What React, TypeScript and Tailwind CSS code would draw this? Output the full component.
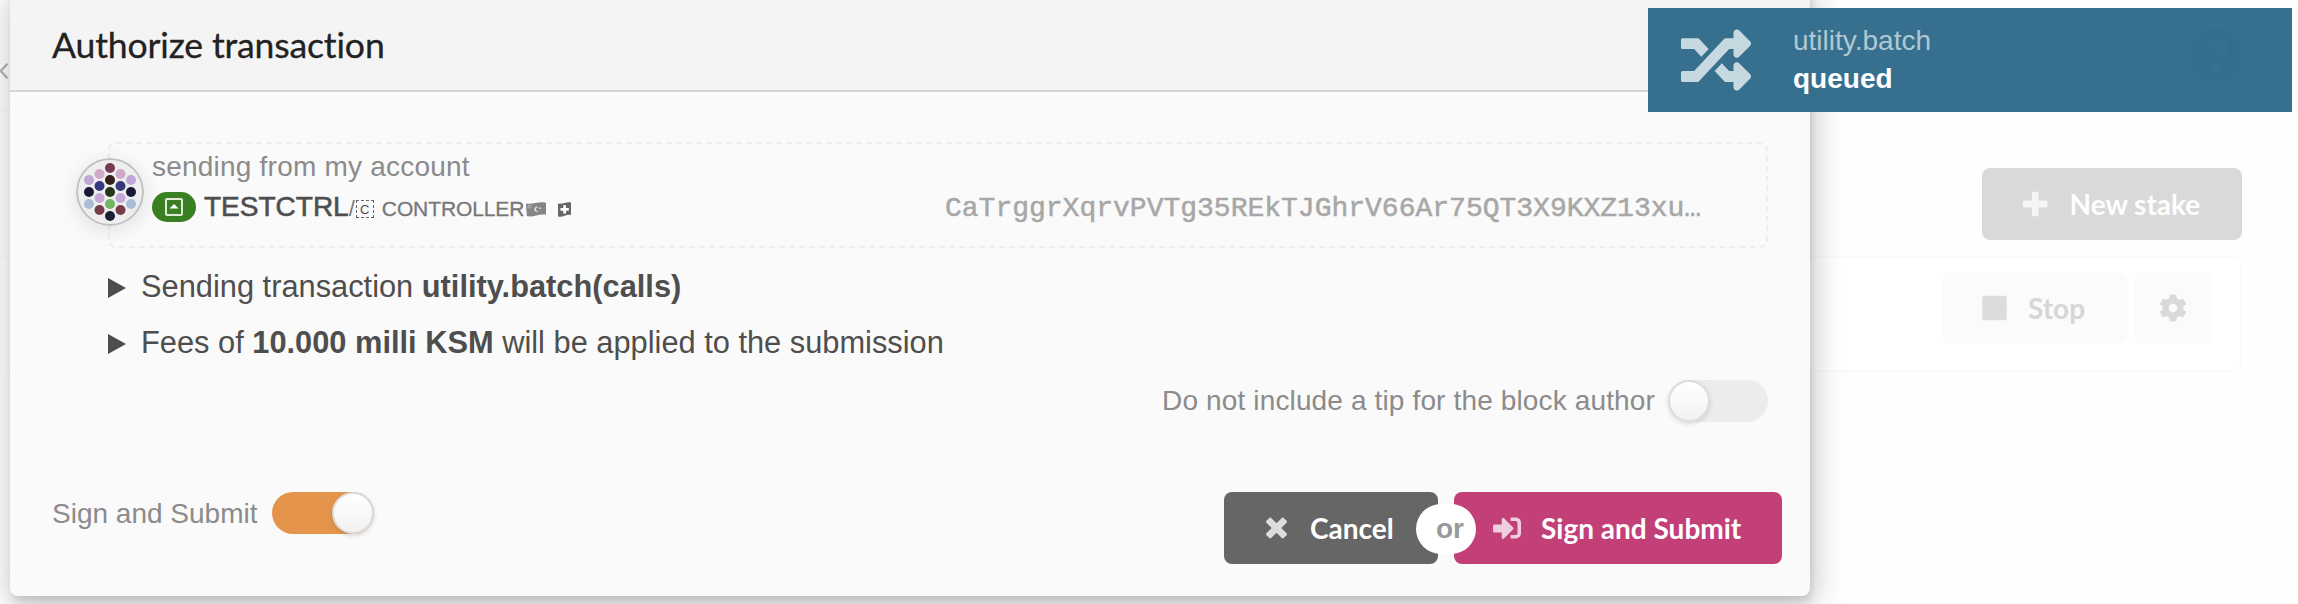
import type { ReactNode } from 'react';
import { FaQuestionCircle, FaRandom, FaSignInAlt, FaStop } from 'react-icons/fa';

type IconProps = { className?: string };

function PlusIcon({ className }: IconProps) {
  return (
    <svg viewBox="0 0 448 512" className={className} fill="currentColor">
      <path d="M448 294.2v-76.4c0-13.3-10.7-24-24-24H286.2V56c0-13.3-10.7-24-24-24h-76.4c-13.3 0-24 10.7-24 24v137.8H24c-13.3 0-24 10.7-24 24v76.4c0 13.3 10.7 24 24 24h137.8V456c0 13.3 10.7 24 24 24h76.4c13.3 0 24-10.7 24-24V318.2H424c13.3 0 24-10.7 24-24z" />
    </svg>
  );
}

function TimesIcon({ className }: IconProps) {
  return (
    <svg viewBox="0 0 384 512" className={className} fill="currentColor">
      <path d="M323.1 441l53.9-53.9c9.4-9.4 9.4-24.5 0-33.9L279.8 256l97.2-97.2c9.4-9.4 9.4-24.5 0-33.9L323.1 71c-9.4-9.4-24.5-9.4-33.9 0L192 168.2 94.8 71c-9.4-9.4-24.5-9.4-33.9 0L7 124.9c-9.4 9.4-9.4 24.5 0 33.9l97.2 97.2L7 353.2c-9.4 9.4-9.4 24.5 0 33.9L60.9 441c9.4 9.4 24.5 9.4 33.9 0l97.2-97.2 97.2 97.2c9.3 9.3 24.5 9.3 33.9 0z" />
    </svg>
  );
}

function CogIcon({ className }: IconProps) {
  return (
    <svg viewBox="0 0 512 512" className={className} fill="currentColor">
      <path d="M444.788 291.1l42.616 24.599c4.867 2.809 7.126 8.618 5.459 13.985-11.07 35.642-29.97 67.842-54.689 94.586a12.016 12.016 0 0 1-14.832 2.254l-42.584-24.595a191.577 191.577 0 0 1-60.759 35.13v49.182a12.01 12.01 0 0 1-9.377 11.718c-34.956 7.85-72.499 8.256-109.219.007-5.49-1.233-9.403-6.096-9.403-11.723v-49.184a191.555 191.555 0 0 1-60.759-35.13l-42.584 24.595a12.016 12.016 0 0 1-14.832-2.254c-24.718-26.744-43.619-58.944-54.689-94.586-1.667-5.366.592-11.175 5.459-13.985L67.212 291.1a193.48 193.48 0 0 1 0-70.199l-42.616-24.599c-4.867-2.809-7.126-8.618-5.459-13.985 11.07-35.642 29.97-67.842 54.689-94.586a12.016 12.016 0 0 1 14.832-2.254l42.584 24.595a191.577 191.577 0 0 1 60.759-35.13V25.759a12.01 12.01 0 0 1 9.377-11.718c34.956-7.85 72.499-8.256 109.219-.007 5.49 1.233 9.403 6.096 9.403 11.723v49.184a191.555 191.555 0 0 1 60.759 35.13l42.584-24.595a12.016 12.016 0 0 1 14.832 2.254c24.718 26.744 43.619 58.944 54.689 94.586 1.667 5.366-.592 11.175-5.459 13.985L444.788 220.9a193.485 193.485 0 0 1 0 70.2zM336 256c0-44.112-35.888-80-80-80s-80 35.888-80 80 35.888 80 80 80 80-35.888 80-80z" />
    </svg>
  );
}

const dots: [number, number, string][] = [
  [34, 10, '#773b58'],
  [23.5, 16, '#d2a8c8'],
  [44.5, 16, '#d2a8c8'],
  [13, 22, '#bfa8d8'],
  [34, 22, '#35201a'],
  [55, 22, '#bfa8d8'],
  [23.5, 28, '#38397c'],
  [44.5, 28, '#38397c'],
  [13, 34, '#191a35'],
  [34, 34, '#26341c'],
  [55, 34, '#191a35'],
  [23.5, 40, '#c3a8d8'],
  [44.5, 40, '#c3a8d8'],
  [13, 46, '#a9bdd9'],
  [34, 46, '#70b666'],
  [55, 46, '#a9bdd9'],
  [23.5, 52, '#773b4a'],
  [44.5, 52, '#773b4a'],
  [34, 58, '#1a2035'],
];

function Identicon() {
  return (
    <svg
      viewBox="0 0 68 68"
      className="size-[68px] shrink-0 rounded-full bg-[#eeeeee] shadow-[0_4px_20px_rgba(0,0,0,0.11)]"
    >
      <circle cx="34" cy="34" r="33" fill="#eeeeee" stroke="#c0c0c0" strokeWidth="2" />
      {dots.map(([x, y, fill], i) => (
        <circle key={i} cx={x} cy={y} r="5" fill={fill} />
      ))}
    </svg>
  );
}

function Toggle({ on }: { on?: boolean }) {
  return (
    <span
      className={
        on
          ? 'flex h-[42px] w-[102px] justify-end rounded-full bg-[#e5954b]'
          : 'flex h-[42px] w-[100px] rounded-full bg-[#ececec]'
      }
    >
      <span className="size-[42px] rounded-full border-2 border-[#dcdcdd] bg-linear-to-b from-white to-[#f2f2f2] shadow-[0_2px_4px_rgba(34,36,38,0.15)]" />
    </span>
  );
}

function Summary({ children }: { children: ReactNode }) {
  return (
    <div className="flex h-14 items-center whitespace-pre text-[30.8px] text-[#4e4e4e]">
      <svg viewBox="0 0 18 20" className="mr-[15px] h-5 w-[18px]" fill="currentColor">
        <path d="M0 0L18 10L0 20z" />
      </svg>
      <span className="pb-0.5">{children}</span>
    </div>
  );
}

function Background() {
  return (
    <div className="flex h-[604px] flex-col bg-[#fefefe]">
      <div className="flex h-[111px] shrink-0 items-center justify-between border-b border-[#f6f6f6] pr-[55px]">
        <svg viewBox="0 0 9 18" className="mt-[31px] h-[18px] w-[9px]" fill="none">
          <path d="M7.5 1.8L.8 9L7.5 16.2" stroke="#b5b5b5" strokeWidth="2.4" />
        </svg>
        <FaQuestionCircle className="size-[54px] text-[#bbbbbb]" />
      </div>
      <div className="flex justify-end pt-[57px] pr-14">
        <button className="flex h-[72px] w-[260px] items-center rounded-lg bg-[#d9d9d9] pb-px pl-[41px] font-['Lato',sans-serif] text-[28px] font-bold text-[#fefefe]">
          <PlusIcon className="mr-[22px] h-7 w-[24.5px] text-[#f5f5f5]" />
          New stake
        </button>
      </div>
      <div className="mt-4 mr-14 flex h-[116px] justify-end gap-1.5 rounded-r-lg border-2 border-[#fbfbfb] bg-white pt-[14px] pr-7">
        <button className="flex h-[72px] w-[186px] items-center rounded-lg bg-[#fbfbfb] pb-px pl-10 font-['Lato',sans-serif] text-[28px] font-bold text-[#d6d6d6]">
          <FaStop className="mr-[21px] h-7 w-[25px] text-[#dcdcdc]" />
          Stop
        </button>
        <button className="flex h-[72px] w-[78px] items-center justify-center rounded-lg bg-[#fbfbfb] text-[#d9d9d9]">
          <CogIcon className="size-7" />
        </button>
      </div>
    </div>
  );
}

function AuthorizeModal() {
  return (
    <section className="absolute top-[-10px] left-[10px] flex h-[606px] w-[1800px] flex-col rounded-lg bg-[#fafafa] shadow-[2px_6px_6px_rgba(0,0,0,0.1),2px_6px_30px_4px_rgba(0,0,0,0.2)]">
      <header className="flex h-[102px] shrink-0 items-center border-b-2 border-[#d4d4d5] bg-[#f4f4f4] pt-[10px] pl-[42px]">
        <h1 className="font-['Lato',sans-serif] text-[35.6px] tracking-[-0.15px] text-[#222222] [-webkit-text-stroke:0.3px_#222222]">
          Authorize transaction
        </h1>
      </header>

      <div className="mt-[50px] ml-[98px] flex h-[106px] w-[1660px] rounded-lg border-2 border-dashed border-[#eeeeee]">
        <div className="mt-[14px] -ml-[34px]">
          <Identicon />
        </div>
        <div className="ml-2 flex grow flex-col">
          <div className="mt-[3px] h-10 text-[28px] leading-10 tracking-[0.22px] text-[#8b8b8b]">
            sending from my account
          </div>
          <div className="mt-[5px] flex h-[30px] items-center">
            <span className="flex h-[30px] w-11 shrink-0 items-center justify-center rounded-full bg-[#388022]">
              <svg viewBox="0 0 18 18" className="size-[18px]" fill="none">
                <rect x="1" y="1" width="16" height="16" rx="1" stroke="#dfeadb" strokeWidth="2" />
                <path d="M4.5 10.5L9 6L13.5 10.5z" fill="#ffffff" />
              </svg>
            </span>
            <span className="flex w-[533px] shrink-0 items-baseline pt-0.5 pl-2 text-[#4e4e4e]">
              <span className="text-[28px] leading-8 [-webkit-text-stroke:0.6px_#4e4e4e]">TESTCTRL</span>
              <span className="text-[22px] leading-8 text-[#777777]">/</span>
              <span className="mt-0.5 mr-[8px] ml-px flex size-[18px] items-center justify-center self-center border border-dashed border-[#666666] text-[13px] leading-none">
                C
              </span>
              <span className="text-[21px] leading-8 tracking-[-0.1px] text-[#777777] [-webkit-text-stroke:0.3px_#777777]">
                CONTROLLER
              </span>
              <svg viewBox="0 0 20 15" className="mt-[3px] ml-0.5 h-[15px] w-5 self-center">
                <path d="M0 1.5C6 3 13-1 20 .8V12.8C13 11 7 16 .8 14z" fill="#858585" />
                <circle cx="3.6" cy="4.6" r="1.5" fill="none" stroke="#cccccc" strokeWidth=".8" />
                <path d="M12.6 5.4A2.6 2.6 0 1 0 12.6 9.2A2 2 0 1 1 12.6 5.4z" fill="#dddddd" />
                <circle cx="14" cy="6.2" r=".9" fill="#dddddd" />
              </svg>
              <svg viewBox="0 0 13 15" className="mt-0.5 ml-3 h-[15px] w-[13px] self-center">
                <path d="M0 1.5C5 2.5 8-.5 13 .5V13C8 12 5 16 0 14.5z" fill="#666666" />
                <path d="M5.3 3.2H8V6H10.8V8.8H8V11.6H5.3V8.8H2.5V6H5.3z" fill="#ffffff" />
              </svg>
            </span>
            <span className="ml-[216px] pt-[3px] font-['Liberation_Mono',monospace] text-[28px] text-[#a7a7a7] [-webkit-text-stroke:0.5px_#a7a7a7]">
              CaTrggrXqrvPVTg35REkTJGhrV66Ar75QT3X9KXZ13xu…
            </span>
          </div>
        </div>
      </div>

      <div className="mt-3 ml-[98px]">
        <Summary>
          Sending transaction <b>utility.batch(calls)</b>
        </Summary>
        <Summary>
          Fees of <b>10.000 milli KSM</b> will be applied to the submission
        </Summary>
      </div>

      <div className="mt-2 mr-[42px] flex items-center justify-end gap-[13px] text-[28px] text-[#8b8b8b]">
        <span className="tracking-[0.14px]">Do not include a tip for the block author</span>
        <Toggle />
      </div>

      <footer className="mt-[70px] flex justify-between pr-7 pl-[42px]">
        <div className="flex h-[42px] items-center gap-[15px] text-[28px] text-[#8b8b8b]">
          <span className="pt-0.5">Sign and Submit</span>
          <Toggle on />
        </div>
        <div className="flex font-['Lato',sans-serif] text-[28px] font-bold text-white">
          <button className="flex h-[72px] w-[214px] items-center rounded-lg bg-[#666666] pb-px pl-[42px]">
            <TimesIcon className="mr-[23px] h-7 w-[21px] text-[#dddddd]" />
            Cancel
          </button>
          <div className="relative w-4">
            <span className="absolute top-3 left-[-22px] flex h-[50px] w-[60px] items-center rounded-full bg-white pl-5 font-['Liberation_Sans',sans-serif] text-[#999999]">
              or
            </span>
          </div>
          <button className="flex h-[72px] w-[328px] items-center rounded-lg bg-[#c33f78] pb-px pl-[39px]">
            <FaSignInAlt className="mr-5 size-7 text-[#efcfdd]" />
            Sign and Submit
          </button>
        </div>
      </footer>
    </section>
  );
}

function QueueToast() {
  return (
    <aside className="absolute top-2 right-1.5 flex h-[104px] w-[644px] items-center bg-[#306b8a]/97 pl-[33px]">
      <FaRandom className="mr-[42px] size-[70px] text-[#c6d9e1]" />
      <div className="pb-px text-[28px] leading-[38px]">
        <div className="text-[#b0c8d4]">utility.batch</div>
        <div className="font-bold text-white">queued</div>
      </div>
    </aside>
  );
}

export default function App() {
  return (
    <main className="relative h-[604px] w-[2298px] overflow-hidden font-['Liberation_Sans',sans-serif]">
      <Background />
      <AuthorizeModal />
      <QueueToast />
    </main>
  );
}
